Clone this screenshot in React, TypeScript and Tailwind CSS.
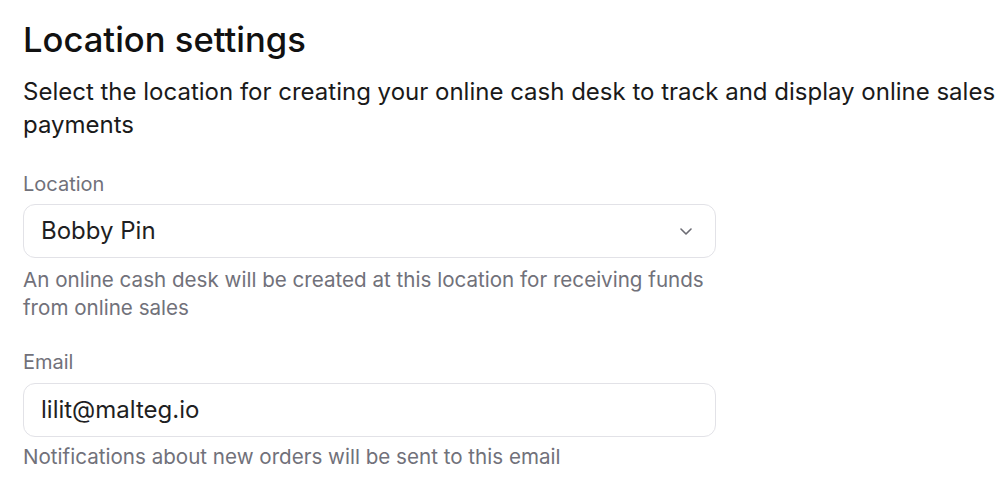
import React from "react";

export default function App() {
  return (
    <div className="min-h-screen bg-white pl-[23px] pr-[4px] pt-[19px] text-[#111] [font-family:Inter,'Noto_Sans',sans-serif]">
      <h1 className="text-[34.6px] font-medium leading-[40px] text-[#111]">Location settings</h1>
      <p className="mt-[16px] text-[24px] leading-[33px] text-[#1a1a1a]">
        Select the location for creating your online cash desk to track and display online sales payments
      </p>
      <div className="mt-[31px] w-[693px]">
        <label className="block text-[20px] leading-[24px] text-[#71717a]">Location</label>
        <div className="mt-[8px] flex h-[54px] items-center justify-between rounded-[12px] border border-[#e2e2e7] bg-white pl-[17px] pr-[23px]">
          <span className="text-[24px] text-[#1f1f23]">Bobby Pin</span>
          <svg width="12" height="7" viewBox="0 0 12 7" fill="none" stroke="#6b6b73" strokeWidth="1.6" strokeLinecap="round" strokeLinejoin="round">
            <path d="M1 1l5 5 5-5" />
          </svg>
        </div>
        <p className="mt-[7.5px] text-[20.6px] leading-[28px] text-[#71717a]">
          An online cash desk will be created at this location for receiving funds from online sales
        </p>
        <label className="mt-[28px] block text-[20px] leading-[24px] text-[#71717a]">Email</label>
        <div className="mt-[9px] flex h-[54px] items-center rounded-[12px] border border-[#e2e2e7] bg-white pl-[17px] pr-[23px]">
          <span className="text-[24px] text-[#1f1f23]">lilit@malteg.io</span>
        </div>
        <p className="mt-[6.5px] text-[20.6px] leading-[28px] text-[#71717a]">
          Notifications about new orders will be sent to this email
        </p>
      </div>
    </div>
  );
}
